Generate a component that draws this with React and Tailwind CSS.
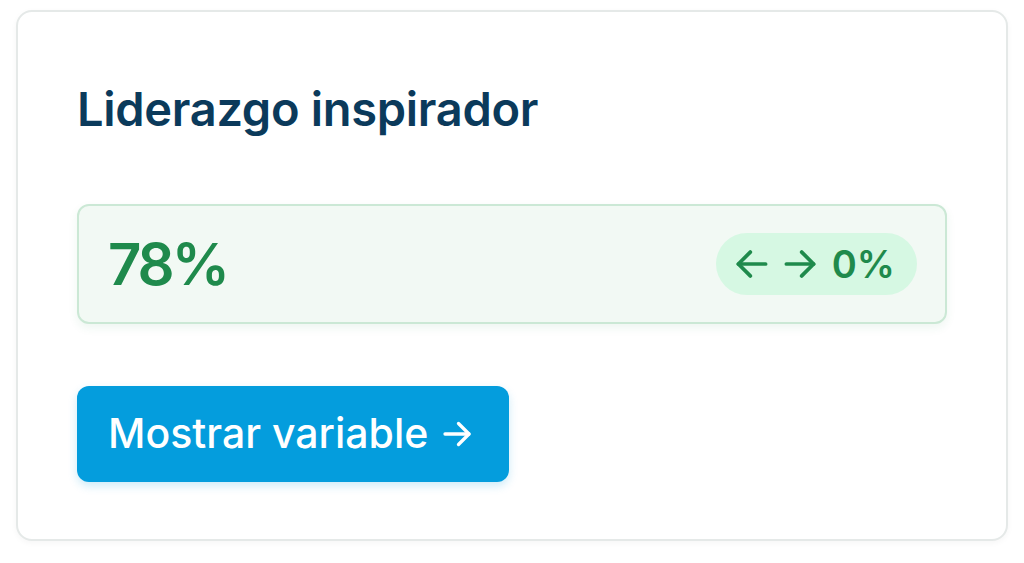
import React from 'react';

function Arrow({ dir = 'right', className = '' }) {
  return (
    <svg viewBox="0 0 20 20" fill="none" stroke="currentColor" strokeWidth="2.2" strokeLinecap="round" strokeLinejoin="round" className={className}>
      {dir === 'right' ? (
        <>
          <path d="M2 10h16" />
          <path d="M11 3l7 7-7 7" />
        </>
      ) : (
        <>
          <path d="M18 10H2" />
          <path d="M9 3l-7 7 7 7" />
        </>
      )}
    </svg>
  );
}

export default function App() {
  return (
    <div className="w-[1024px] h-[563px] bg-white pt-[10px] pl-[16px]" style={{ fontFamily: 'Inter, "Noto Sans", sans-serif' }}>
      <div className="w-[992px] h-[531px] rounded-[16px] border-2 border-[#e5e9e8] bg-white shadow-[0_2px_6px_rgba(0,0,0,0.04)] pl-[59px] pr-[59px] pt-[70px]">
        <h2 className="text-[47px] leading-[54px] font-semibold text-[#0b3a5b] tracking-[-0.3px]">Liderazgo inspirador</h2>

        <div className="mt-[68px] h-[120px] rounded-[12px] border-2 border-[#cbe8d5] bg-[#f2f9f4] shadow-[0_4px_10px_rgba(34,139,76,0.08)] flex items-center justify-between pl-[29px] pr-[28px]">
          <span className="text-[58px] font-semibold text-[#1f8a4c] leading-none tracking-[-3px]">78%</span>
          <div className="h-[62px] rounded-full bg-[#d6f8e3] flex items-center pl-[19px] pr-[22px] text-[#1f8a4c]">
            <Arrow dir="left" className="w-[34px] h-[34px]" />
            <Arrow dir="right" className="w-[34px] h-[34px] ml-[14px]" />
            <span className="ml-[15px] text-[38px] font-semibold leading-none">0%</span>
          </div>
        </div>

        <button className="mt-[62px] h-[96px] w-[432px] rounded-[12px] bg-[#049ddd] shadow-[0_4px_10px_rgba(4,157,221,0.2)] flex items-center pl-[31px] text-white text-[41px] font-medium gap-[14px]">
          <span>Mostrar variable</span>
          <Arrow dir="right" className="w-[30px] h-[30px]" />
        </button>
      </div>
    </div>
  );
}
